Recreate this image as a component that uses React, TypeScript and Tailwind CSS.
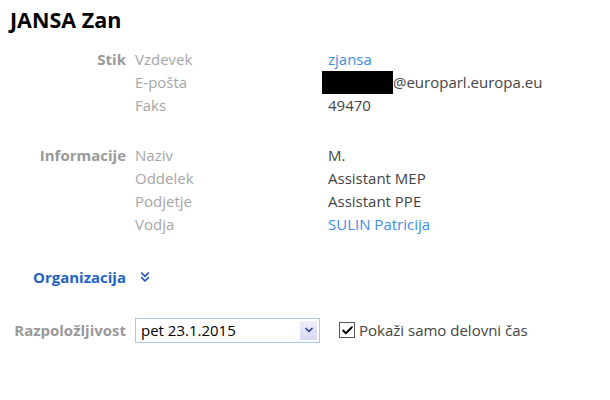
import { Check, ChevronDown, ChevronsDown } from "lucide-react";

type Row = { name: string; value: React.ReactNode };

function Section({ title, rows }: { title: string; rows: Row[] }) {
  return (
    <div className="flex">
      <div className="w-[126px] shrink-0 text-right font-bold text-[#999999] leading-[23px]">{title}</div>
      <div className="ml-[9px] flex flex-col">
        {rows.map((row) => (
          <div key={row.name} className="flex leading-[23px]">
            <span className="w-[193px] shrink-0 text-[#a6a6a6]">{row.name}</span>
            <span className="text-[#444444]">{row.value}</span>
          </div>
        ))}
      </div>
    </div>
  );
}

export default function App() {
  const link = "text-[#3c8ee0]";
  return (
    <div className="h-[400px] w-[610px] bg-white font-['Open_Sans',sans-serif] text-[15px]">
      <h1 className="pl-[10px] pt-[5px] text-[21.5px] font-bold leading-[29px] text-black">JANSA Zan</h1>

      <div className="mt-[14px]">
        <Section
          title="Stik"
          rows={[
            { name: "Vzdevek", value: <span className={link}>zjansa</span> },
            {
              name: "E-pošta",
              value: (
                <span className="-ml-[6px] flex items-center">
                  <span className="inline-block h-[23px] w-[71px] bg-black" />
                  <span>@europarl.europa.eu</span>
                </span>
              ),
            },
            { name: "Faks", value: "49470" },
          ]}
        />
      </div>

      <div className="mt-[27px]">
        <Section
          title="Informacije"
          rows={[
            { name: "Naziv", value: "M." },
            { name: "Oddelek", value: "Assistant MEP" },
            { name: "Podjetje", value: "Assistant PPE" },
            { name: "Vodja", value: <span className={link}>SULIN Patricija</span> },
          ]}
        />
      </div>

      <div className="mt-[30px] flex items-center">
        <span className="w-[126px] text-right font-bold text-[#1f63c6]">Organizacija</span>
        <ChevronsDown className="ml-[11px] h-[16px] w-[16px] text-[#2a55b8]" strokeWidth={2.5} />
      </div>

      <div className="mt-[29px] flex items-center">
        <span className="w-[126px] text-right font-bold text-[#999999]">Razpoložljivost</span>
        <div className="ml-[9px] flex h-[25px] w-[185px] items-center border border-[#a9c8ec] bg-white">
          <span className="flex-1 pl-[5px] text-[15px] text-black">pet 23.1.2015</span>
          <span className="mr-[2px] flex h-[19px] w-[17px] items-center justify-center bg-gradient-to-b from-[#eeeefc] to-[#d8d8f6]">
            <ChevronDown className="h-[12px] w-[12px] text-[#27458f]" strokeWidth={3.5} />
          </span>
        </div>
        <label className="ml-[19px] flex items-center">
          <span className="flex h-[16px] w-[16px] items-center justify-center border border-[#555555] bg-white">
            <Check className="h-[13px] w-[13px] text-black" strokeWidth={3.5} />
          </span>
          <span className="ml-[4px] text-[15px] text-[#444444]">Pokaži samo delovni čas</span>
        </label>
      </div>
    </div>
  );
}
